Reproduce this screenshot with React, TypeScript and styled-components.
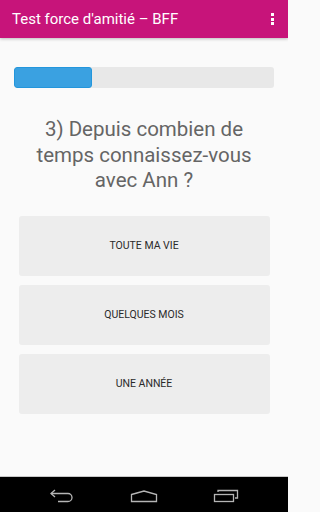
import React from 'react';
import styled, { createGlobalStyle } from 'styled-components';

const answers = ['Toute ma vie', 'Quelques mois', 'Une année'];

const GlobalStyle = createGlobalStyle`
  html, body {
    margin: 0;
    padding: 0;
    background: #fafafa;
  }

  #root {
    height: 512px;
  }
`;

const App: React.FC = () => (
  <>
    <GlobalStyle />
    <Screen>
      <ActionBar>
        <Title>Test force d&apos;amitié – BFF</Title>
        <Overflow>
          <Dot />
          <Dot />
          <Dot />
        </Overflow>
      </ActionBar>

      <Content>
        <Progress>
          <ProgressFill style={{ width: '30%' }} />
        </Progress>

        <Question>3) Depuis combien de temps connaissez-vous avec Ann ?</Question>

        <Answers>
          {answers.map((a) => (
            <AnswerButton key={a}>{a}</AnswerButton>
          ))}
        </Answers>
      </Content>

      <NavBar>
        <NavIcon>
          <svg width="26" height="14" viewBox="0 0 26 14" fill="none" stroke="#b5b5b5" strokeWidth="1.3">
            <path d="M5 1 L1 4.5 L5 8" />
            <path d="M1 4.5 H18 a4 4 0 0 1 0 8 H8" />
          </svg>
        </NavIcon>
        <NavIcon>
          <svg width="28" height="13" viewBox="0 0 28 13" fill="none" stroke="#b5b5b5" strokeWidth="1.3">
            <path d="M1.5 4.5 L14 1 L26.5 4.5 V11.5 H1.5 Z" />
          </svg>
        </NavIcon>
        <NavIcon>
          <svg width="26" height="14" viewBox="0 0 26 14" fill="none" stroke="#b5b5b5" strokeWidth="1.3">
            <rect x="1.5" y="5.5" width="19" height="7" />
            <path d="M5 3 V1.5 H24.5 V9 H22" />
          </svg>
        </NavIcon>
      </NavBar>
    </Screen>
  </>
);

export default App;

const Screen = styled.div`
  width: 288px;
  height: 512px;
  display: flex;
  flex-direction: column;
  background: #fafafa;
  font-family: Roboto, 'Liberation Sans', sans-serif;
  overflow: hidden;
`;

const ActionBar = styled.header`
  height: 38px;
  flex: none;
  display: flex;
  align-items: center;
  justify-content: space-between;
  padding: 0 12px;
  background: #c7147a;
  box-shadow: 0 1px 3px rgba(0, 0, 0, 0.25);
  position: relative;
  z-index: 1;
`;

const Title = styled.h1`
  margin: 0;
  font-size: 15px;
  font-weight: 400;
  color: #fff;
`;

const Overflow = styled.div`
  display: flex;
  flex-direction: column;
  gap: 1.5px;
  margin-right: 2px;
`;

const Dot = styled.span`
  width: 3px;
  height: 3px;
  background: #fff;
`;

const Content = styled.main`
  flex: 1;
  display: flex;
  flex-direction: column;
  align-items: center;
  padding: 29px 14px 0;
`;

const Progress = styled.div`
  width: 260px;
  height: 21px;
  border-radius: 3px;
  background: #e8e8e8;
  overflow: hidden;
`;

const ProgressFill = styled.div`
  height: 100%;
  background: #3aa1e1;
  border: 1px solid #2396dc;
  border-radius: 3px;
  box-sizing: border-box;
`;

const Question = styled.h2`
  margin: 29px 0 0;
  width: 250px;
  font-size: 20.5px;
  line-height: 25.5px;
  font-weight: 400;
  text-align: center;
  color: #656565;
`;

const Answers = styled.div`
  margin-top: 22px;
  width: 251px;
  display: flex;
  flex-direction: column;
  gap: 9px;
`;

const AnswerButton = styled.button`
  height: 60px;
  border: none;
  border-radius: 3px;
  background: #ededed;
  font-family: Roboto, 'Liberation Sans', sans-serif;
  font-size: 10.5px;
  color: #2a2a2a;
  text-transform: uppercase;
  padding: 0;
`;

const NavBar = styled.nav`
  height: 35px;
  flex: none;
  display: flex;
  align-items: center;
  justify-content: space-around;
  padding: 0 21px 0 22px;
  background: #000;
  border-top: 1px solid #c8c8c8;
`;

const NavIcon = styled.div`
  width: 40px;
  display: flex;
  justify-content: center;
  padding-top: 3px;
`;
